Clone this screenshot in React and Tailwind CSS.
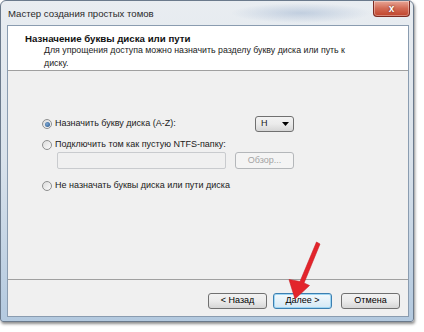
function Radio({ checked }) {
  return (
    <span className="relative flex items-center justify-center w-[10px] h-[10px] rounded-full border border-[#8e8f8f] bg-gradient-to-br from-[#dcdcdc] to-[#fbfbfb] shrink-0">
      {checked && (
        <span className="w-[5px] h-[5px] rounded-full bg-[radial-gradient(circle_at_40%_40%,#7fa9d4,#1f4f86)]" />
      )}
    </span>
  );
}

function Btn({ children, focused, disabled, className = "" }) {
  return (
    <div
      className={
        "h-[16px] flex items-center justify-center rounded-[3px] border text-[9px] " +
        (focused
          ? "border-[#3c7fb1] bg-gradient-to-b from-[#f4fafd] to-[#d4e8f5] shadow-[inset_0_0_0_1px_#9fd6f3] text-black"
          : disabled
          ? "border-[#b4b7ba] bg-[#f4f4f4] text-[#a3a3a3]"
          : "border-[#707070] bg-gradient-to-b from-[#f2f2f2] via-[#ebebeb] to-[#d6d6d6] text-black") +
        " " +
        className
      }
    >
      {children}
    </div>
  );
}

export default function App() {
  return (
    <div className="relative w-[424px] h-[332px] bg-white overflow-hidden font-['Liberation_Sans',Arial,sans-serif] text-black">
      <div className="w-[414px] h-[322px] flex flex-col rounded-t-[6px] rounded-b-[3px] border border-[#6b7a8c] bg-gradient-to-b from-[#e9edf1] via-[#d9e2eb] to-[#b3c9df] shadow-[1px_2px_3px_rgba(0,0,0,0.45)]">
        {/* title bar */}
        <div className="h-[24px] flex items-start pl-[7px] pr-[3px] bg-[radial-gradient(ellipse_70px_10px_at_300px_12px,rgba(120,150,190,0.35),transparent)]">
          <span className="mt-[7px] text-[9.6px] leading-[12px] text-[#2a2a2a]">
            Мастер создания простых томов
          </span>
          <div className="ml-auto w-[37px] h-[16px] flex items-center justify-center rounded-b-[4px] border border-t-0 border-[#7d2b22] bg-gradient-to-b from-[#e7a596] via-[#d26a54] to-[#c0432b] shadow-[inset_0_0_0_1px_rgba(255,255,255,0.35)]">
            <span className="text-white text-[10px] font-bold leading-none [text-shadow:0_0_2px_#5a1a10]">x</span>
          </div>
        </div>

        {/* client */}
        <div className="ml-[6px] mr-[4px] h-[292px] flex flex-col border border-[#8a9cb0] bg-[#f0f0f0]">
          {/* header */}
          <div className="h-[45px] bg-white border-b border-[#a0a0a0] pt-[7px] pl-[17px]">
            <div className="text-[9.7px] leading-[12px] font-bold text-[#111]">
              Назначение буквы диска или пути
            </div>
            <div className="mt-[-1px] pl-[19px] text-[8.8px] leading-[13px] text-[#222] w-[330px]">
              Для упрощения доступа можно назначить разделу букву диска или путь к
              <br />
              диску.
            </div>
          </div>

          {/* body */}
          <div className="h-[208px] pl-[34px] pt-[45px] text-[9px] text-[#1a1a1a]">
            <div className="flex items-center h-[16px]">
              <div className="w-[213px] flex items-center gap-[3px]">
                <Radio checked />
                <span>Назначить букву диска (A-Z):</span>
              </div>
              <div className="w-[39px] h-[16px] flex items-center justify-between pl-[5px] pr-[4px] rounded-[3px] border border-[#707070] bg-gradient-to-b from-[#f2f2f2] via-[#ebebeb] to-[#d6d6d6]">
                <span>H</span>
                <svg width="7" height="4" viewBox="0 0 7 4">
                  <path d="M0 0 L7 0 L3.5 4 Z" fill="#000" />
                </svg>
              </div>
            </div>
            <div className="mt-[6px] h-[14px] flex items-center gap-[3px]">
              <Radio />
              <span>Подключить том как пустую NTFS-папку:</span>
            </div>
            <div className="flex items-center h-[17px] pl-[15px]">
              <div className="w-[169px] h-[17px] rounded-[2px] border border-[#c9cbce] bg-[#f0f0f0]" />
              <Btn disabled className="ml-[9px] w-[59px] h-[17px]">
                Обзор...
              </Btn>
            </div>
            <div className="mt-[10px] h-[14px] flex items-center gap-[3px]">
              <Radio />
              <span>Не назначать буквы диска или пути диска</span>
            </div>
          </div>

          {/* buttons */}
          <div className="h-[37px] border-t border-[#a0a0a0] flex items-start justify-end pt-[13px] pr-[8px] gap-[6px]">
            <Btn className="w-[59px]">&lt; Назад</Btn>
            <Btn focused className="w-[59px]">
              Далее &gt;
            </Btn>
            <Btn className="w-[59px] ml-[3px]">Отмена</Btn>
          </div>
        </div>
      </div>

      {/* red arrow */}
      <svg className="absolute left-0 top-0" width="424" height="332" viewBox="0 0 424 332">
        <path
          d="M316.5 242 L320 244 L304 283 L309.5 285.5 L295 299 L289 279.5 L300 281.5 Z"
          fill="#e3242b"
          stroke="#c81d24"
          strokeWidth="0.6"
          strokeLinejoin="round"
        />
      </svg>
    </div>
  );
}
